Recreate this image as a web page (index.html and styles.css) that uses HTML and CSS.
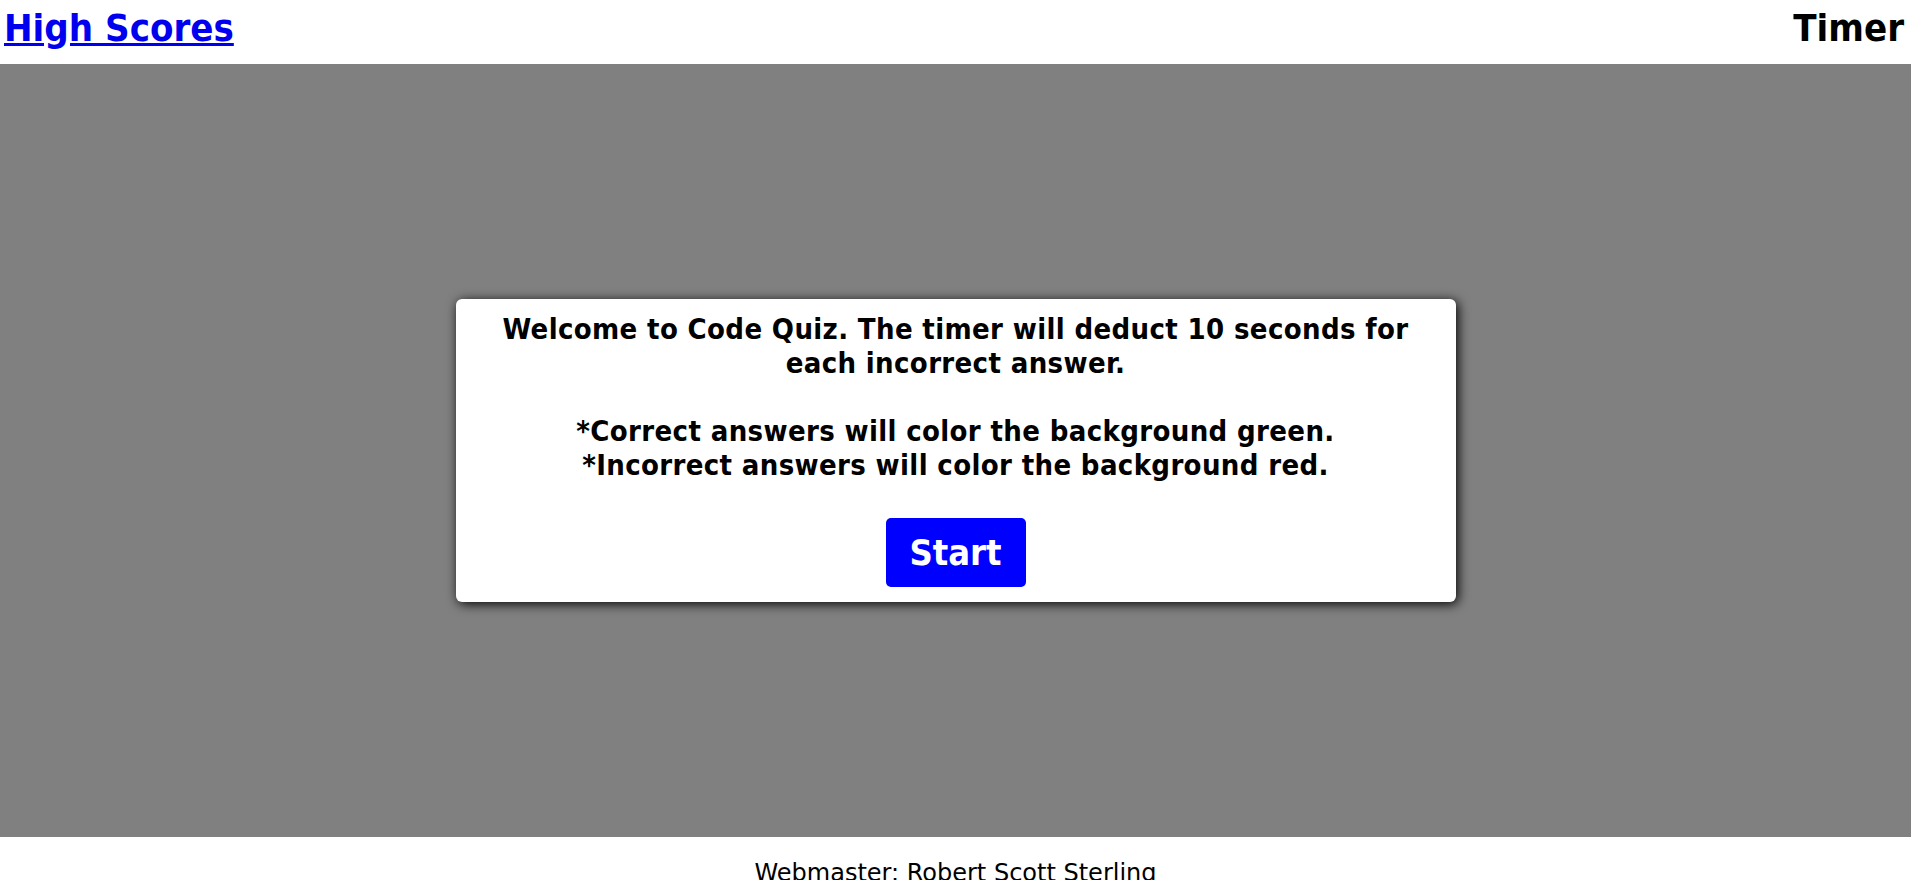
FILE: index.html
```html
<!DOCTYPE html>
<html lang="en">
<head>
<meta charset="utf-8">
<title>Code Quiz</title>
<link rel="stylesheet" href="styles.css">
</head>
<body>
<header class="topbar">
  <a class="scores-link" href="#">High Scores</a>
  <div class="timer">Timer</div>
</header>
<main class="stage">
  <section class="card">
    <p class="intro">Welcome to Code Quiz. The timer will deduct 10 seconds for<br>each incorrect answer.<br><br>*Correct answers will color the background green.<br>*Incorrect answers will color the background red.</p>
    <button class="start-btn" type="button">Start</button>
  </section>
</main>
<footer class="footer">Webmaster: Robert Scott Sterling</footer>
</body>
</html>
```
FILE: styles.css
```css
html, body {
  margin: 0;
  padding: 0;
}
body {
  font-family: "DejaVu Sans", sans-serif;
  font-stretch: condensed;
  background: #ffffff;
  color: #000000;
}
.topbar {
  height: 64px;
  display: flex;
  justify-content: space-between;
  align-items: flex-start;
  padding: 0 7px 0 4px;
  box-sizing: border-box;
}
.scores-link, .timer {
  font-size: 38px;
  font-weight: bold;
  line-height: 44px;
  padding-top: 6px;
}
.scores-link {
  color: #0000ee;
  text-decoration: underline;
}
.stage {
  height: 773px;
  background: #808080;
  display: flex;
  align-items: center;
  justify-content: center;
}
.card {
  width: 1000px;
  height: 303px;
  box-sizing: border-box;
  background: #ffffff;
  border-radius: 6px;
  box-shadow: 2px 2px 12px #000000;
  display: flex;
  flex-direction: column;
  align-items: center;
  padding-top: 13px;
}
.intro {
  margin: 0;
  font-size: 29px;
  font-weight: bold;
  line-height: 34px;
  letter-spacing: 0.35px;
  text-align: center;
}
.start-btn {
  margin-top: 36px;
  width: 140px;
  height: 69px;
  background: #0000ff;
  color: #ffffff;
  border: none;
  border-radius: 5px;
  font-family: "DejaVu Sans", sans-serif;
  font-stretch: condensed;
  font-size: 36px;
  font-weight: bold;
  padding: 0;
}
.footer {
  text-align: center;
  font-size: 24px;
  font-stretch: normal;
  line-height: 28px;
  padding-top: 22px;
  height: 60px;
  box-sizing: border-box;
}
```
